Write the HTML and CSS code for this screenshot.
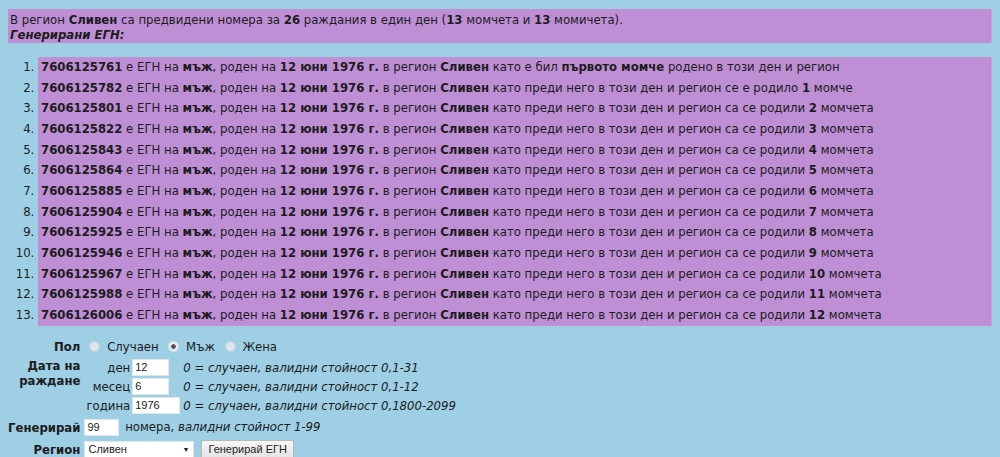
FILE: index.html
```html
<!DOCTYPE html>
<html lang="bg">
<head>
<meta charset="utf-8">
<title>Генератор на ЕГН</title>
<link rel="stylesheet" href="styles.css">
</head>
<body>
<div class="summary">
  В регион <b>Сливен</b> са предвидени номера за <b>26</b> раждания в един ден (<b>13</b> момчета и <b>13</b> момичета).<br>
  <b><i>Генерирани ЕГН:</i></b>
</div>
<ol class="results">
  <li><span class="row"><b>7606125761</b> е ЕГН на <b>мъж</b>, роден на <b>12 юни 1976 г.</b> в регион <b>Сливен</b> като е бил <b>първото момче</b> родено в този ден и регион</span></li>
  <li><span class="row"><b>7606125782</b> е ЕГН на <b>мъж</b>, роден на <b>12 юни 1976 г.</b> в регион <b>Сливен</b> като преди него в този ден и регион се е родило <b>1</b> момче</span></li>
  <li><span class="row"><b>7606125801</b> е ЕГН на <b>мъж</b>, роден на <b>12 юни 1976 г.</b> в регион <b>Сливен</b> като преди него в този ден и регион са се родили <b>2</b> момчета</span></li>
  <li><span class="row"><b>7606125822</b> е ЕГН на <b>мъж</b>, роден на <b>12 юни 1976 г.</b> в регион <b>Сливен</b> като преди него в този ден и регион са се родили <b>3</b> момчета</span></li>
  <li><span class="row"><b>7606125843</b> е ЕГН на <b>мъж</b>, роден на <b>12 юни 1976 г.</b> в регион <b>Сливен</b> като преди него в този ден и регион са се родили <b>4</b> момчета</span></li>
  <li><span class="row"><b>7606125864</b> е ЕГН на <b>мъж</b>, роден на <b>12 юни 1976 г.</b> в регион <b>Сливен</b> като преди него в този ден и регион са се родили <b>5</b> момчета</span></li>
  <li><span class="row"><b>7606125885</b> е ЕГН на <b>мъж</b>, роден на <b>12 юни 1976 г.</b> в регион <b>Сливен</b> като преди него в този ден и регион са се родили <b>6</b> момчета</span></li>
  <li><span class="row"><b>7606125904</b> е ЕГН на <b>мъж</b>, роден на <b>12 юни 1976 г.</b> в регион <b>Сливен</b> като преди него в този ден и регион са се родили <b>7</b> момчета</span></li>
  <li><span class="row"><b>7606125925</b> е ЕГН на <b>мъж</b>, роден на <b>12 юни 1976 г.</b> в регион <b>Сливен</b> като преди него в този ден и регион са се родили <b>8</b> момчета</span></li>
  <li><span class="row"><b>7606125946</b> е ЕГН на <b>мъж</b>, роден на <b>12 юни 1976 г.</b> в регион <b>Сливен</b> като преди него в този ден и регион са се родили <b>9</b> момчета</span></li>
  <li><span class="row"><b>7606125967</b> е ЕГН на <b>мъж</b>, роден на <b>12 юни 1976 г.</b> в регион <b>Сливен</b> като преди него в този ден и регион са се родили <b>10</b> момчета</span></li>
  <li><span class="row"><b>7606125988</b> е ЕГН на <b>мъж</b>, роден на <b>12 юни 1976 г.</b> в регион <b>Сливен</b> като преди него в този ден и регион са се родили <b>11</b> момчета</span></li>
  <li><span class="row"><b>7606126006</b> е ЕГН на <b>мъж</b>, роден на <b>12 юни 1976 г.</b> в регион <b>Сливен</b> като преди него в този ден и регион са се родили <b>12</b> момчета</span></li>
</ol>

<form class="egn-form">
  <table class="form-table">
    <tr>
      <th>Пол</th>
      <td class="gender">
        <label><input type="radio" name="sex" value="0"> Случаен</label>
        <label><input type="radio" name="sex" value="1" checked> Мъж</label>
        <label><input type="radio" name="sex" value="2"> Жена</label>
      </td>
    </tr>
    <tr>
      <th class="top">Дата на<br>раждане</th>
      <td>
        <table class="date-table">
          <tr>
            <td class="dlabel">ден</td>
            <td><input type="text" class="field w-day" value="12"></td>
            <td class="hint">0 = случаен, валидни стойност 0,1-31</td>
          </tr>
          <tr>
            <td class="dlabel">месец</td>
            <td><input type="text" class="field w-day" value="6"></td>
            <td class="hint">0 = случаен, валидни стойност 0,1-12</td>
          </tr>
          <tr>
            <td class="dlabel">година</td>
            <td><input type="text" class="field w-year" value="1976"></td>
            <td class="hint">0 = случаен, валидни стойност 0,1800-2099</td>
          </tr>
        </table>
      </td>
    </tr>
    <tr>
      <th>Генерирай</th>
      <td><input type="text" class="field w-count" value="99"> номера, <i>валидни стойност 1-99</i></td>
    </tr>
    <tr>
      <th>Регион</th>
      <td>
        <span class="select">Сливен<span class="arrow">▼</span></span>
        <button type="button" class="btn">Генерирай ЕГН</button>
      </td>
    </tr>
  </table>
</form>
</body>
</html>
```

FILE: styles.css
```css
html {
  background: #9ecfe5;
}

body {
  margin: 8px;
  background: #9ecfe5;
  color: #1c1c1c;
  font-family: "DejaVu Sans Condensed", Verdana, "DejaVu Sans", sans-serif;
  font-stretch: condensed;
  font-size: 13px;
  line-height: 15px;
}

.summary {
  margin: 1px -2px 0 -1px;
  padding: 3px 3px 1px 3px;
  background: #bf8fd6;
  border-right: 3px solid #c7a0dc;
}

.results {
  margin: 14px -2px 0 0;
  padding: 0 0 0 30px;
}

.results li {
  line-height: 20.67px;
  color: #1c1c1c;
  background: #bf8fd6;
  border-right: 3px solid #c7a0dc;
}

.results .row {
  padding-left: 3px;
}

.egn-form {
  margin-top: 11px;
}

.form-table,
.date-table {
  border-collapse: collapse;
}

.form-table th {
  text-align: right;
  vertical-align: middle;
  padding: 0 4px 0 0;
  font-weight: bold;
  line-height: 15px;
  white-space: nowrap;
}

.form-table th.top {
  vertical-align: top;
  padding-top: 2px;
}

.form-table > tbody > tr > td {
  padding: 2px 0;
  vertical-align: middle;
  white-space: nowrap;
}

.gender label {
  margin-right: 1px;
}

.gender input[type="radio"] {
  width: 11px;
  height: 11px;
  margin: 0 3px 0 5px;
  vertical-align: -1px;
  appearance: none;
  border-radius: 50%;
  background: radial-gradient(circle, #dfe7ec 0 45%, #c9d6dd 60%, #b5c6cf 100%);
}

.gender input[type="radio"]:checked {
  background: radial-gradient(circle, #555 0 25%, #e4ecf0 35% 55%, #b5c6cf 100%);
}

.date-table td {
  padding: 1px 0;
  vertical-align: middle;
}

.date-table .dlabel {
  text-align: right;
  padding: 1px 2px 1px 2px;
}

.date-table .hint {
  font-style: italic;
  padding-left: 3px;
}

.field {
  box-sizing: border-box;
  height: 17px;
  border: 1px solid #dfe7ea;
  background: #fff;
  font-family: Arial, "Liberation Sans", sans-serif;
  font-size: 11px;
  padding: 0 2px;
  margin: 0;
  vertical-align: middle;
  color: #222;
}

.w-day {
  width: 37px;
}

.w-year {
  width: 48px;
}

.w-count {
  width: 35px;
  margin-right: 2px;
}

.select {
  display: inline-block;
  box-sizing: border-box;
  width: 110px;
  height: 17px;
  background: #fff;
  border: 1px solid #dfe7ea;
  font-family: Arial, "Liberation Sans", sans-serif;
  font-size: 11px;
  line-height: 15px;
  padding: 0 3px;
  vertical-align: middle;
  position: relative;
}

.arrow {
  position: absolute;
  right: 4px;
  top: 0;
  font-size: 7px;
}

.btn {
  box-sizing: border-box;
  width: 93px;
  height: 19px;
  margin-left: 3px;
  padding: 0;
  font-family: Arial, "Liberation Sans", sans-serif;
  font-size: 11px;
  color: #222;
  background: linear-gradient(#f6f6f6, #e4e4e4);
  border: 1px solid #b9b9b9;
  border-radius: 2px;
  vertical-align: middle;
}
```
